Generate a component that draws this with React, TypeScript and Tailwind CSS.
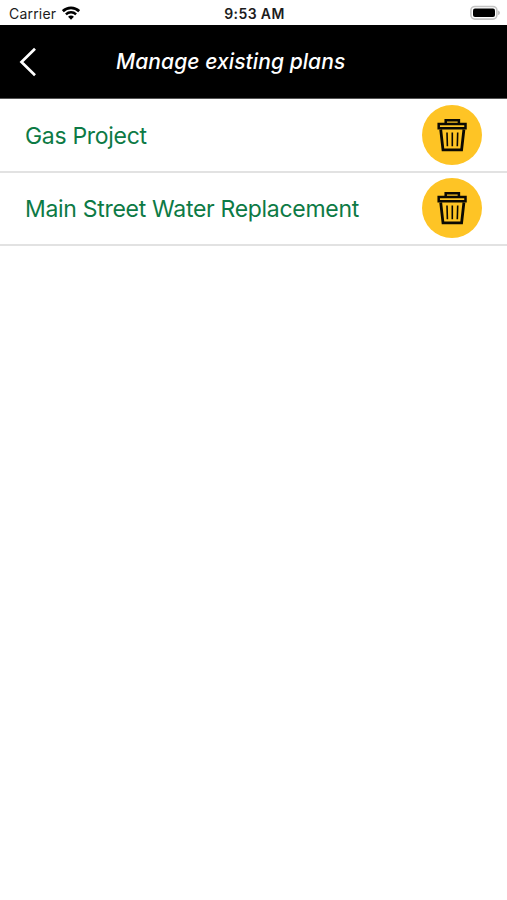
const plans = [
  { id: 1, name: 'Gas Project' },
  { id: 2, name: 'Main Street Water Replacement' },
];

function StatusBar() {
  return (
    <div className="grid h-[25px] grid-cols-3 items-center pl-[9px] pr-[7px] text-[#1c1c1c]">
      <div className="flex items-center gap-[6px]">
        <span className="text-[14px] leading-none tracking-[0.2px] pt-[2px]">
          Carrier
        </span>
        <svg width="18" height="14" viewBox="0 0 18 14" fill="none">
          <path d="M0.8 5.2a11.8 11.8 0 0 1 16.4 0" stroke="#000" strokeWidth="2.8" />
          <path d="M3.9 8.4a7.3 7.3 0 0 1 10.2 0" stroke="#000" strokeWidth="2.4" />
          <path d="M9 13.8l-2.9-3a4 4 0 0 1 5.8 0z" fill="#000" />
        </svg>
      </div>
      <div className="pt-[2px] text-center text-[14px] font-semibold leading-none tracking-[0.4px]">
        9:53 AM
      </div>
      <div className="flex justify-end">
        <svg width="30" height="15" viewBox="0 0 30 15">
          <rect x="0.9" y="1.5" width="26" height="12.6" rx="4" fill="#fff" stroke="#c4c4c4" strokeWidth="1.6" />
          <rect x="3" y="3.5" width="22" height="8.6" rx="2" fill="#000" />
          <path d="M28.2 5.5v4.6c1-.4 1.6-1.3 1.6-2.3s-.6-1.9-1.6-2.3z" fill="#b5b5b5" />
        </svg>
      </div>
    </div>
  );
}

function Header() {
  return (
    <header className="grid h-[74px] grid-cols-[60px_1fr_106px] items-center border-b border-[#555] bg-black text-white">
      <button aria-label="Back" className="pl-[19px]">
        <svg width="18" height="30" viewBox="0 0 18 30" fill="none">
          <path d="M16 1.8L2.5 15L16 28.2" stroke="#fff" strokeWidth="2.7" />
        </svg>
      </button>
      <h1 className="whitespace-nowrap pl-[56px] text-[21px] font-medium italic leading-none tracking-[0.08px]">
        Manage existing plans
      </h1>
    </header>
  );
}

function DeleteButton() {
  return (
    <button aria-label="Delete plan" className="size-[60px] shrink-0 rounded-full bg-[#fec425]">
      <svg width="60" height="60" viewBox="0 0 60 60" fill="none" stroke="#0b0903">
        <path d="M23.7 18.5V15.3H36.9V18.5" strokeWidth="2.5" />
        <path d="M16.7 18.9H43.5V23.3H16.7z" strokeWidth="2.5" />
        <path d="M18.7 24.5L21 44.8H39.6L41.9 24.5" strokeWidth="2.8" />
        <path d="M25 27.5L25.4 41.3M30.3 27.5V41.3M35.7 27.5L35.3 41.3" strokeWidth="1.6" />
      </svg>
    </button>
  );
}

export default function App() {
  return (
    <div className="min-h-screen w-full bg-white font-['Inter',sans-serif]">
      <StatusBar />
      <Header />
      <ul>
        {plans.map((plan) => (
          <li
            key={plan.id}
            className="flex h-[73.5px] items-center justify-between border-b-2 border-[#e2e2e2] px-[25px]"
          >
            <span className="whitespace-nowrap pt-[3px] text-[23px] leading-none tracking-[-0.3px] text-[#0d7a45]">
              {plan.name}
            </span>
            <DeleteButton />
          </li>
        ))}
      </ul>
    </div>
  );
}
